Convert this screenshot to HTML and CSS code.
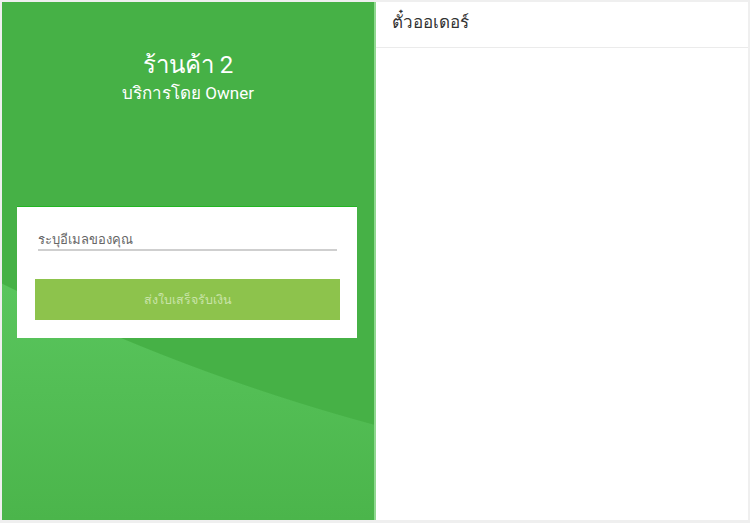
FILE: index.html
```html
<!DOCTYPE html>
<html lang="th">
<head>
<meta charset="utf-8">
<title>ร้านค้า 2</title>
<link rel="stylesheet" href="styles.css">
</head>
<body>
<div class="screen">
  <section class="shop">
    <h1 class="shop-name">ร้านค้า 2</h1>
    <p class="shop-by">บริการโดย Owner</p>
    <div class="card">
      <input class="email" type="text" placeholder="ระบุอีเมลของคุณ">
      <button class="send" type="button">ส่งใบเสร็จรับเงิน</button>
    </div>
  </section>
  <section class="orders">
    <header class="orders-head">ตั๋วออเดอร์</header>
  </section>
</div>
</body>
</html>
```

FILE: styles.css
```css
* { box-sizing: border-box; }
html, body { margin: 0; padding: 0; }
body {
  width: 750px;
  height: 523px;
  background: #efefef;
  font-family: Roboto, "Noto Sans", "DejaVu Sans", sans-serif;
  overflow: hidden;
}
.screen {
  display: flex;
  height: 523px;
  padding: 2px 2px 3px 2px;
}
.shop {
  width: 374px;
  flex: none;
  border-right: 2px solid #8fd88f;
  background:
    radial-gradient(circle 2026px at 901px -1533px, #46b146 2025.5px, rgba(70,177,70,0) 2026.5px),
    linear-gradient(180deg, #5bc75f 0%, #5bc75f 50%, #4bb54b 100%);
  padding: 48px 0 0 15px;
  color: #fff;
  text-align: center;
}
.shop-name {
  margin: 0 15px 0 0;
  font-size: 24px;
  line-height: 30px;
  font-weight: 400;
}
.shop-by {
  margin: 3px 15px 0 0;
  font-size: 17px;
  line-height: 20px;
}
.card {
  width: 340px;
  margin-top: 103px;
  background: #fff;
  border-top: 1px solid #22b522;
  padding: 25px 17px 18px 18px;
  display: flex;
  flex-direction: column;
}
.email {
  margin: 0 3px;
  border: 0;
  border-bottom: 2px solid #cfcfcf;
  padding: 0 0 3px 0;
  height: 19px;
  font-family: inherit;
  font-size: 13px;
  line-height: 14px;
  outline: none;
  background: transparent;
}
.email::placeholder { color: #666; }
.send {
  margin-top: 28px;
  height: 41px;
  border: 0;
  background: #8dc34c;
  color: #c9e3a9;
  font-family: inherit;
  font-size: 12.5px;
}
.orders {
  flex: 1;
  background: #fff;
}
.orders-head {
  height: 46px;
  border-bottom: 1px solid #ebebeb;
  padding: 0 0 6px 16px;
  display: flex;
  align-items: center;
  font-size: 17px;
  color: #333;
}
```
